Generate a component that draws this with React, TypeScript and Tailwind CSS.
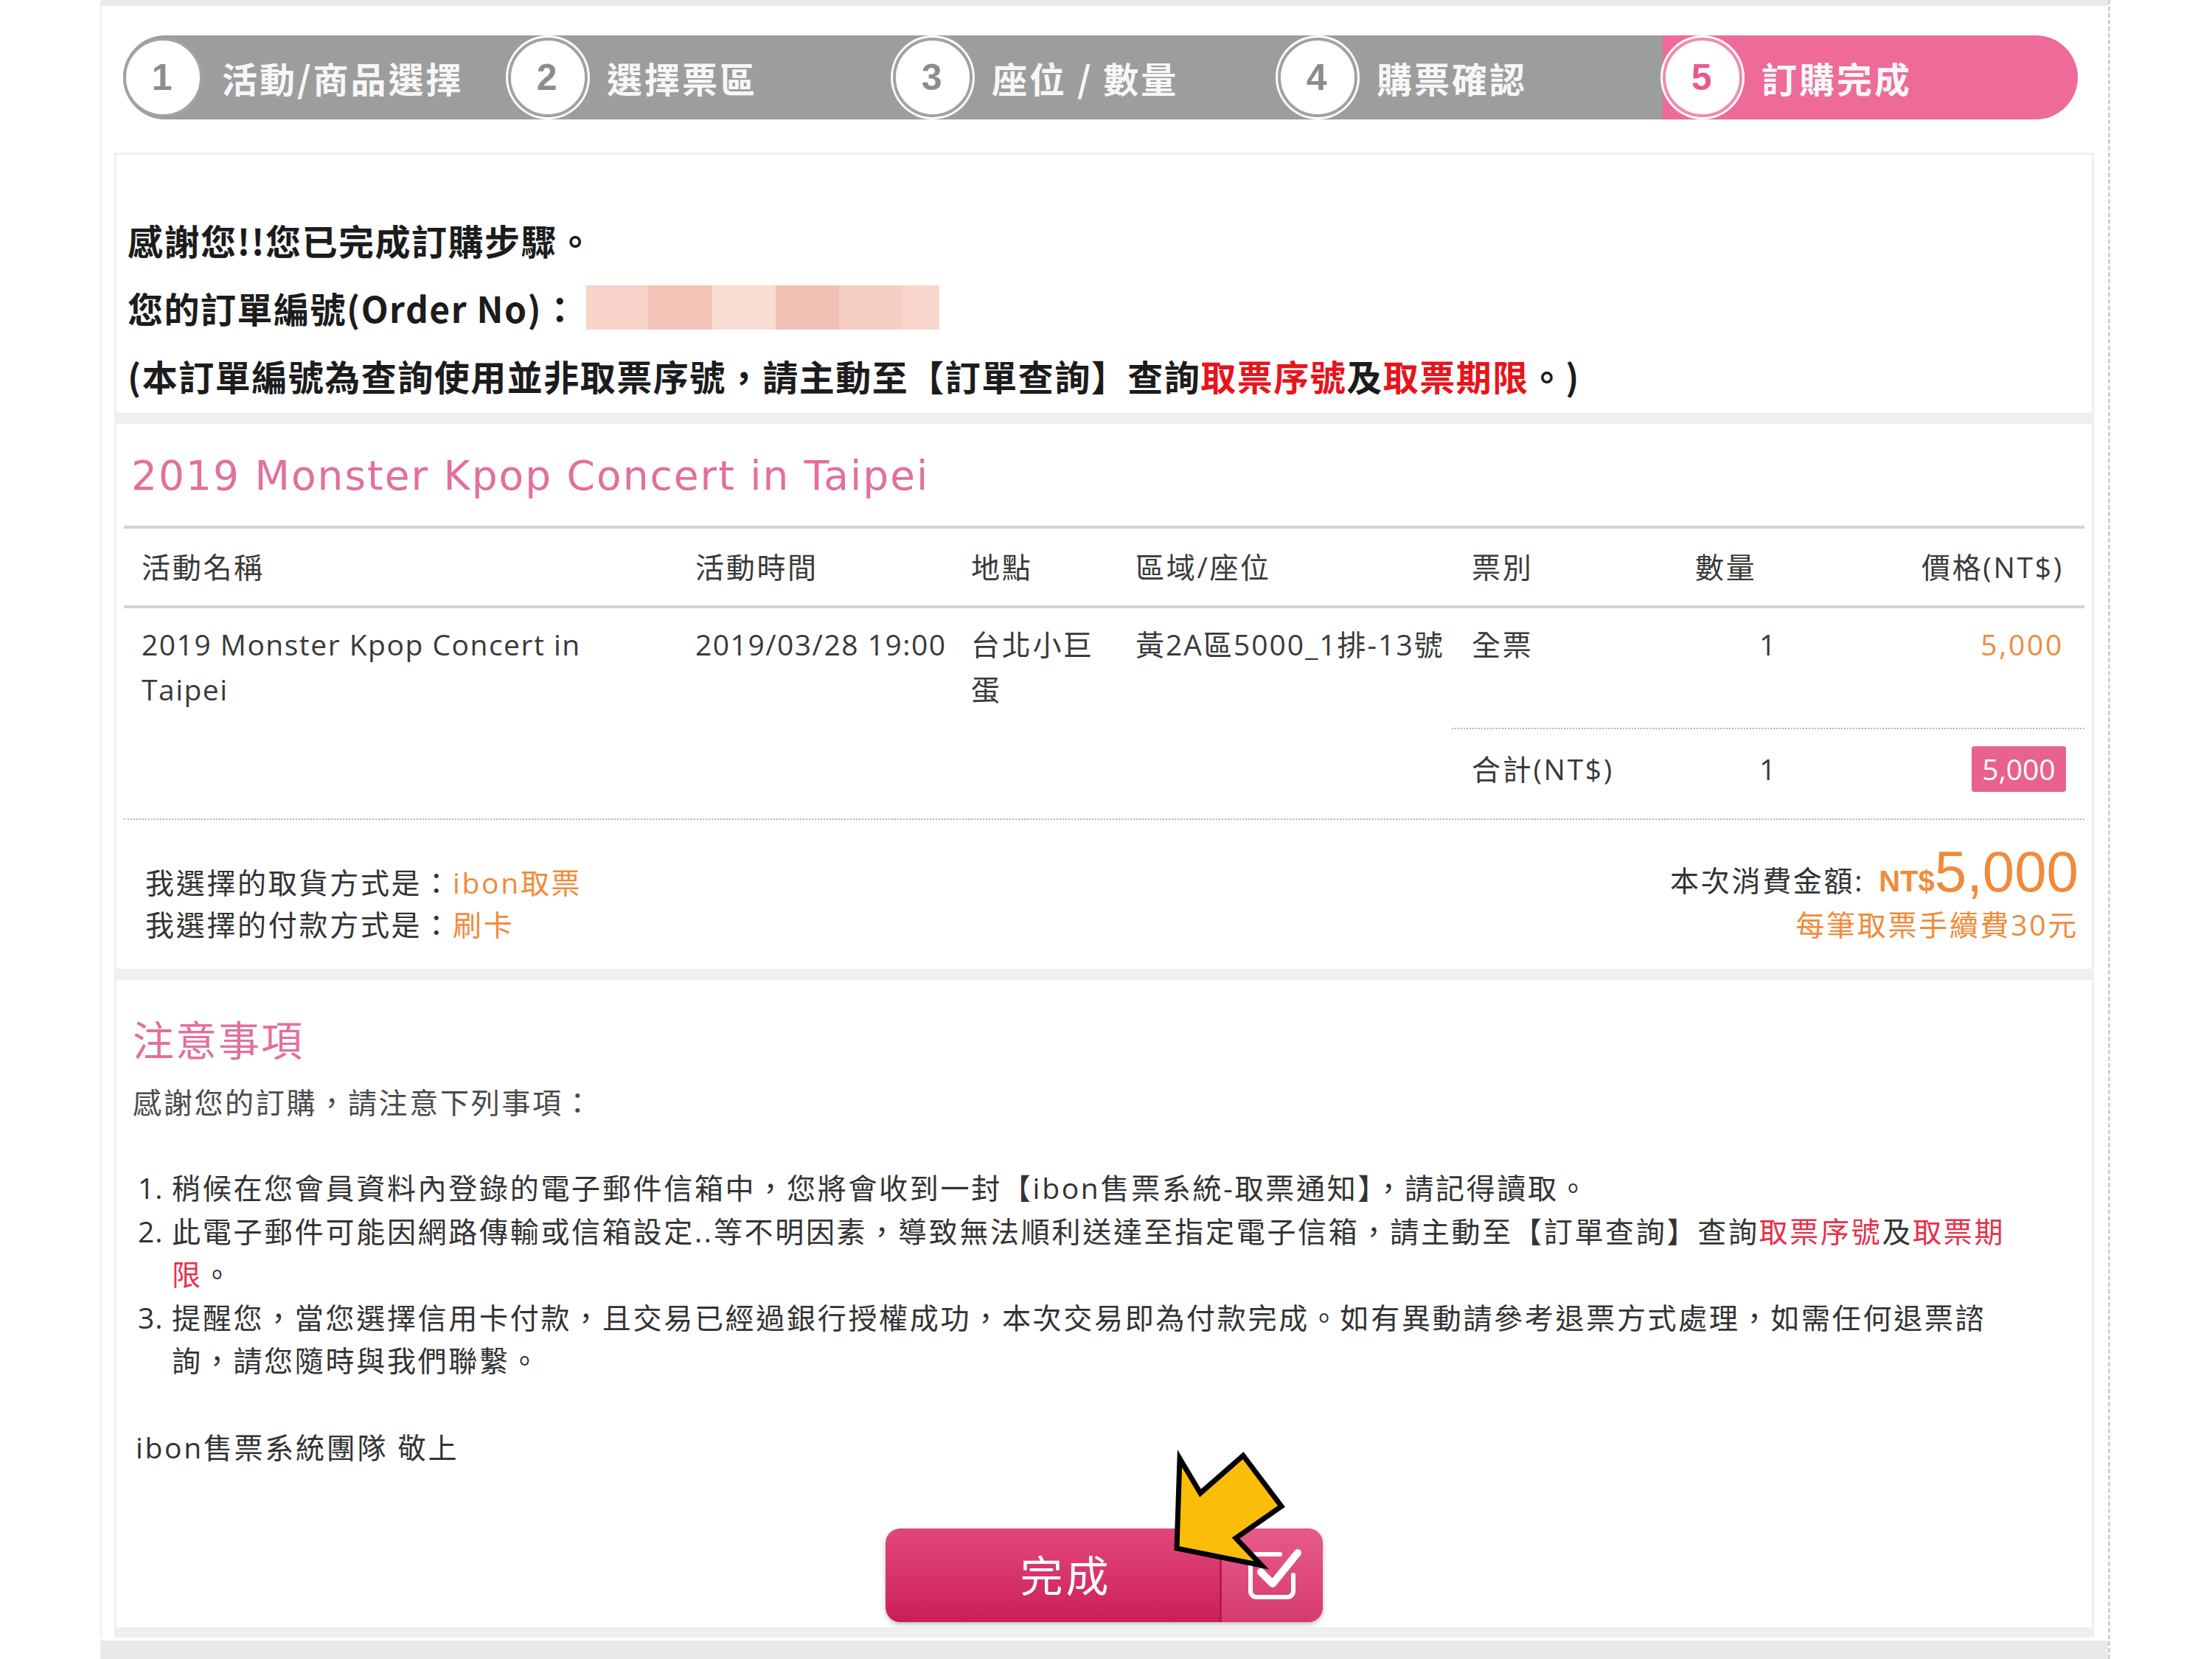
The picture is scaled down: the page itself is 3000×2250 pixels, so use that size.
import React from 'react';

const steps = ['活動/商品選擇', '選擇票區', '座位 / 數量', '購票確認', '訂購完成'];

function StepBar() {
  return (
    <div className="ml-[31px] mt-[40px] flex h-[114px] w-[2651px]">
      {steps.map((label, i) => {
        const last = i === steps.length - 1;
        const seg = last
          ? 'flex flex-1 items-center rounded-r-full bg-[#ee6a98]'
          : i === 0
          ? 'flex w-[522px] items-center rounded-l-full bg-[#9c9e9d]'
          : 'flex w-[522px] items-center bg-[#9c9e9d]';
        const circle = last
          ? 'flex h-[108px] w-[108px] shrink-0 items-center justify-center rounded-full border-[4px] border-[#f08cb0] bg-white text-[#e85a8c] shadow-[0_0_0_3px_#ffffff]'
          : i === 0
          ? 'flex h-[108px] w-[108px] shrink-0 items-center justify-center rounded-full border-[4px] border-[#a2a2a2] bg-white text-[#8c8c8c]'
          : 'flex h-[108px] w-[108px] shrink-0 items-center justify-center rounded-full border-[4px] border-[#a2a2a2] bg-white text-[#8c8c8c] shadow-[0_0_0_3px_#ffffff]';
        return (
          <div key={label} className={seg}>
            <div className={circle}>
              <span className="font-['Liberation_Sans',sans-serif] text-[50px] font-bold">{i + 1}</span>
            </div>
            <span className="ml-[26px] font-['Noto_Sans_CJK_TC',sans-serif] text-[48px] font-bold tracking-[3px] text-[#f7f7f7]">
              {label}
            </span>
          </div>
        );
      })}
    </div>
  );
}

function Mosaic() {
  const blocks = [
    ['w-[84px]', 'bg-[#f7d3ca]'],
    ['w-[87px]', 'bg-[#f3c3b8]'],
    ['w-[86px]', 'bg-[#f9dcd4]'],
    ['w-[86px]', 'bg-[#f2c0b5]'],
    ['w-[86px]', 'bg-[#f6cdc3]'],
    ['w-[50px]', 'bg-[#f8d6cd]'],
  ];
  return (
    <span className="ml-[10px] inline-flex h-[60px] w-[479px] overflow-hidden">
      {blocks.map(([w, bg], i) => (
        <span key={i} className={`${w} ${bg} h-full`} />
      ))}
    </span>
  );
}

function ThanksPanel() {
  return (
    <div className="h-[350px] bg-white pl-[15px] pt-[69px] font-['Noto_Sans_CJK_TC',sans-serif] text-[48px] font-bold leading-[92px] tracking-[1.5px] text-[#1c1c1c]">
      <div>感謝您!!您已完成訂購步驟。</div>
      <div className="flex items-center">
        您的訂單編號(Order No)：<Mosaic />
      </div>
      <div className="whitespace-nowrap">
        (本訂單編號為查詢使用並非取票序號，請主動至【訂單查詢】查詢
        <span className="text-[#e8141c]">取票序號</span>及<span className="text-[#e8141c]">取票期限</span>。)
      </div>
    </div>
  );
}

const cols = 'grid grid-cols-[775px_374px_223px_456px_303px_200px_327px]';

function OrderPanel() {
  return (
    <div className="flex h-[739px] flex-col bg-white">
      <div className="h-[138px] pl-[20px] pt-[35px] font-['DejaVu_Sans',sans-serif] text-[55px] leading-[70px] tracking-[2px] text-[#e2709a]">
        2019 Monster Kpop Concert in Taipei
      </div>
      <div className="mx-[10px] text-[#3a3a3a]">
        <div className={`${cols} h-[112px] items-center border-y-[4px] border-[#d3d3d3]`}>
          <div className="pl-[24px]">活動名稱</div>
          <div>活動時間</div>
          <div>地點</div>
          <div>區域/座位</div>
          <div>票別</div>
          <div>數量</div>
          <div className="pr-[27px] text-right">價格(NT$)</div>
        </div>
        <div className={`${cols} h-[162px] pt-[18px] leading-[61px]`}>
          <div className="pl-[24px] tracking-[1.5px]">
            2019 Monster Kpop Concert in
            <br />
            Taipei
          </div>
          <div className="tracking-[1.5px]">2019/03/28 19:00</div>
          <div>
            台北小巨
            <br />蛋
          </div>
          <div className="whitespace-nowrap tracking-[2px]">黃2A區5000_1排-13號</div>
          <div>全票</div>
          <div className="pl-[87px]">1</div>
          <div className="pr-[27px] text-right text-[#f08b3a]">5,000</div>
        </div>
        <div className="ml-[1801px] border-t-[2px] border-dotted border-[#b5b5b5]" />
        <div className={`${cols} h-[121px] items-center pb-[13px]`}>
          <div />
          <div />
          <div />
          <div />
          <div>合計(NT$)</div>
          <div className="pl-[87px]">1</div>
          <div className="flex justify-end pr-[24px]">
            <span className="flex h-[62px] w-[128px] items-center justify-center rounded-[4px] bg-[#e9628f] text-white tracking-[0px]">
              5,000
            </span>
          </div>
        </div>
        <div className="border-t-[2px] border-dotted border-[#b5b5b5]" />
      </div>
      <div className="mx-[10px] flex flex-1 items-end justify-between pb-[32px] pl-[29px] pr-[8px]">
        <div className="leading-[57px] text-[#333333]">
          <div>
            我選擇的取貨方式是：<span className="text-[#f08b3a]">ibon取票</span>
          </div>
          <div>
            我選擇的付款方式是：<span className="text-[#f08b3a]">刷卡</span>
          </div>
        </div>
        <div className="flex flex-col items-end">
          <div className="flex items-baseline">
            <span className="leading-[57px] text-[#333333]">本次消費金額:</span>
            <span className="ml-[20px] font-['Liberation_Sans',sans-serif] text-[40px] font-bold tracking-[0px] text-[#f08b3a]">NT$</span>
            <span className="font-['Liberation_Sans',sans-serif] text-[78px] leading-none tracking-[0px] text-[#f08b3a]">5,000</span>
          </div>
          <div className="leading-[57px] text-[#f08b3a]">每筆取票手續費30元</div>
        </div>
      </div>
    </div>
  );
}

function CheckIcon() {
  return (
    <svg width="84" height="84" viewBox="0 0 84 84" fill="none">
      <path
        d="M52 14 H20 a8 8 0 0 0 -8 8 V64 a8 8 0 0 0 8 8 H62 a8 8 0 0 0 8 -8 V42"
        stroke="white"
        strokeWidth="6"
        strokeLinecap="round"
      />
      <path d="M26 38 L42 54 L76 12" stroke="white" strokeWidth="10" strokeLinejoin="round" strokeLinecap="round" />
    </svg>
  );
}

function Arrow() {
  return (
    <svg className="absolute left-[379px] top-[-115px]" width="180" height="180" viewBox="0 0 180 180">
      <polygon
        points="20,20 48,67 106,16 158,85 96,128 131,165 16,142"
        fill="#fbbd08"
        stroke="#000000"
        strokeWidth="7"
        strokeLinejoin="miter"
      />
    </svg>
  );
}

function NoticePanel() {
  const red = 'text-[#e6304a]';
  return (
    <div className="flex h-[878px] flex-col bg-white pt-[41px]">
      <div className="pl-[22px] text-[56px] leading-[80px] tracking-[2px] text-[#e2709a]">注意事項</div>
      <div className="mt-[16px] pl-[22px] leading-[58px] text-[#4a4a4a]">感謝您的訂購，請注意下列事項：</div>
      <ol className="mt-[58px] pl-[29px] leading-[58.5px] text-[#333333]">
        <li className="flex">
          <span className="w-[46px] shrink-0 tracking-[1px]">1.</span>
          <span className="whitespace-nowrap">
            稍候在您會員資料內登錄的電子郵件信箱中，您將會收到一封【ibon售票系統-取票通知】，請記得讀取。
          </span>
        </li>
        <li className="flex">
          <span className="w-[46px] shrink-0 tracking-[1px]">2.</span>
          <span className="whitespace-nowrap">
            此電子郵件可能因網路傳輸或信箱設定..等不明因素，導致無法順利送達至指定電子信箱，請主動至【訂單查詢】查詢
            <span className={red}>取票序號</span>及<span className={red}>取票期</span>
            <br />
            <span className={red}>限</span>。
          </span>
        </li>
        <li className="flex">
          <span className="w-[46px] shrink-0 tracking-[1px]">3.</span>
          <span className="whitespace-nowrap">
            提醒您，當您選擇信用卡付款，且交易已經過銀行授權成功，本次交易即為付款完成。如有異動請參考退票方式處理，如需任何退票諮
            <br />
            詢，請您隨時與我們聯繫。
          </span>
        </li>
      </ol>
      <div className="mt-[59px] pl-[26px] leading-[58px] text-[#333333]">ibon售票系統團隊 敬上</div>
      <div className="mt-[81px] flex justify-center">
        <div className="relative">
          <div className="flex h-[127px] w-[593px] overflow-hidden rounded-[20px] bg-gradient-to-b from-[#e2477c] to-[#cb1c58] shadow-[0_3px_6px_rgba(0,0,0,0.25)]">
            <div className="flex w-[453px] items-center justify-center pl-[36px] text-[58px] tracking-[4px] text-white">完成</div>
            <div className="flex flex-1 items-center justify-center border-l-[3px] border-[#b8174f] bg-gradient-to-b from-[#e65a8a] to-[#d63b6d]">
              <CheckIcon />
            </div>
          </div>
          <Arrow />
        </div>
      </div>
    </div>
  );
}

export default function App() {
  return (
    <div className="relative h-[2250px] w-[3000px] overflow-hidden bg-white font-['Open_Sans','Noto_Sans_CJK_TC',sans-serif] text-[39px] tracking-[2.7px]">
      <div className="ml-[136px] flex h-full w-[2726px] flex-col border-r-[3px] border-dashed border-r-[#d2d2d2] shadow-[inset_2px_0_0_#eeeeee]">
        <div className="h-[8px] bg-[#ebebeb]" />
        <StepBar />
        <div className="ml-[19px] mt-[45px] flex w-[2685px] flex-col gap-[15px] bg-[#efefef] px-[3px] pb-[14px] pt-[3px]">
          <ThanksPanel />
          <OrderPanel />
          <NoticePanel />
        </div>
        <div className="h-[4px] bg-white" />
        <div className="flex-1 bg-[#e9e9e9]" />
      </div>
    </div>
  );
}
